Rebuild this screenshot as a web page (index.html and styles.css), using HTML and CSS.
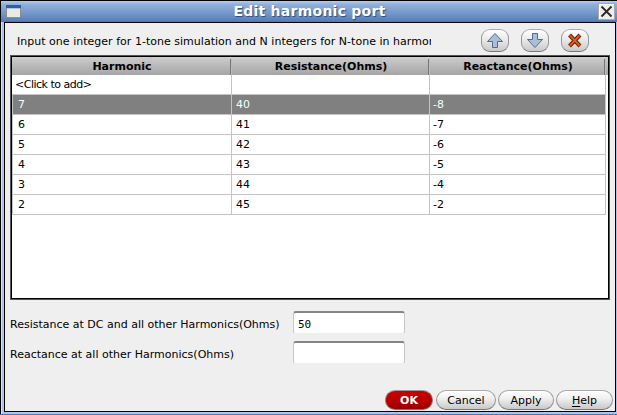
FILE: index.html
```
<!DOCTYPE html>
<html lang="en">
<head>
<meta charset="utf-8">
<title>Edit harmonic port</title>
<link rel="stylesheet" href="styles.css">
</head>
<body>
<div class="window">
  <header class="titlebar">
    <svg class="window-icon" width="15" height="13" viewBox="0 0 15 13" shape-rendering="crispEdges"><rect width="15" height="13" fill="#8d8d85"/><rect x="1" y="1" width="13" height="11" fill="#e8ebe5"/><rect width="15" height="3" fill="#315f9f"/><rect x="1" y="3" width="13" height="1" fill="#a9c4e5"/></svg>
    <h1>Edit harmonic port</h1>
    <button class="close" aria-label="Close"><svg width="17" height="17" viewBox="0 0 17 17"><path d="M3.5 3.5 13.5 13.5M13.5 3.5 3.5 13.5" stroke="#292929" stroke-width="1.8"/></svg></button>
  </header>
  <main class="content">
    <div class="toolbar">
      <p class="hint"><span class="hint-text">Input one integer for 1-tone simulation and N integers for N-tone in harmonic</span></p>
      <div class="tools">
        <button class="tool" aria-label="Move up"><svg width="18" height="18" viewBox="0 0 18 18"><path d="M9 1.5 16.5 9.5H11.5V15.5H6.5V9.5H1.5Z" fill="#a8bfd6" stroke="#526d8c"/></svg></button>
        <button class="tool" aria-label="Move down"><svg width="18" height="18" viewBox="0 0 18 18"><path d="M6.5 1.5H11.5V7.5H16.5L9 15.5 1.5 7.5H6.5Z" fill="#a8bfd6" stroke="#526d8c"/></svg></button>
        <button class="tool" aria-label="Delete"><svg width="18" height="18" viewBox="0 0 18 18"><path d="M3.5 3 14 14M14 3 3.5 14" stroke="#7d2805" stroke-width="4"/><path d="M4 3.5 13.5 13.5M13.5 3.5 4 13.5" stroke="#df6329" stroke-width="1.8"/></svg></button>
      </div>
    </div>
    <div class="table-frame">
      <table>
        <colgroup><col class="col-h"><col class="col-r"><col class="col-x"></colgroup>
        <thead><tr><th>Harmonic</th><th>Resistance(Ohms)</th><th>Reactance(Ohms)</th></tr></thead>
        <tbody>
          <tr class="add"><td>&lt;Click to add&gt;</td><td></td><td></td></tr>
          <tr class="selected"><td>7</td><td>40</td><td>-8</td></tr>
          <tr><td>6</td><td>41</td><td>-7</td></tr>
          <tr><td>5</td><td>42</td><td>-6</td></tr>
          <tr><td>4</td><td>43</td><td>-5</td></tr>
          <tr><td>3</td><td>44</td><td>-4</td></tr>
          <tr><td>2</td><td>45</td><td>-2</td></tr>
        </tbody>
      </table>
    </div>
    <form class="fields">
      <label for="res">Resistance at DC and all other Harmonics(Ohms)</label><input id="res" value="50">
      <label for="rea" class="second">Reactance at all other Harmonics(Ohms)</label><input id="rea">
    </form>
    <footer class="actions">
      <button class="ok">OK</button><button class="cancel">Cancel</button><button class="apply">Apply</button><button class="help"><u>H</u>elp</button>
    </footer>
  </main>
</div>
</body>
</html>
```
FILE: styles.css
```
* { box-sizing: border-box; }
body { margin: 0; overflow: hidden; font: 11px "DejaVu Sans", sans-serif; color: #000; }
button { padding: 0; font: inherit; color: inherit; }
svg { display: block; }
.window {
  width: 617px; height: 415px; padding: 0 1px 3px 4px;
  border-top: 1px solid #000;
  background: linear-gradient(#4a78b4, #4a78b4) bottom / 100% 1px no-repeat,
    linear-gradient(90deg, #000 1px, #d5e1f5 1px 2px, #adc3e8 2px 4px, #adc3e8 4px);
}
.titlebar {
  display: flex; align-items: center; height: 21px;
  margin: 0 -1px 0 -3px; padding: 0 2px 0 5px;
  background: linear-gradient(#b5cdef, #92b1dd 15%, #5f87bd 85%, #5079b0);
}
.window-icon { margin-bottom: 1px; }
h1 {
  flex: 1; margin: -1px 0 0; text-align: center; white-space: nowrap;
  color: #fff; font-size: 14px; line-height: 20px; letter-spacing: .25px;
  text-shadow: 1px 1px 1px #304d77;
}
.close { width: 17px; height: 17px; border: 0; background: #eee; box-shadow: inset 0 0 0 1px #aaa, inset 2px 2px #fff; }
.content {
  display: flex; flex-direction: column; height: 390px; padding: 6px 4px 1px 5px;
  border: 1px solid #000; background: #efefef;
}
.toolbar { display: flex; height: 26px; }
.hint { width: 414px; height: 25px; margin: 0 0 0 7px; overflow: hidden; line-height: 26px; white-space: nowrap; }
.hint-text { letter-spacing: .02px; }
.tools { display: flex; gap: 12px; margin-left: 50px; }
.tool {
  display: grid; place-items: center; width: 28px; height: 23px;
  border: 1px solid #929292; border-color: #aaa #969696 #777; border-radius: 9px;
  background: linear-gradient(#fff, #e7e7e7 50%, #c9c9c9);
}
.table-frame {
  width: 600px; height: 245px; border: 2px solid #000; background: #fff;
  outline: 1px solid #555; outline-offset: -1px;
}
table { width: 596px; border-spacing: 0; table-layout: fixed; }
.col-h { width: 220px; }
.col-r { width: 198px; }
.col-x { width: 178px; }
th {
  position: relative; height: 18px; padding: 2px 0 0; line-height: 16px;
  background: linear-gradient(#cecccc, #a5a5a5);
}
th::after { content: ""; position: absolute; right: 1px; top: 2px; bottom: 0; width: 1px; background: #777; box-shadow: 1px 0 #bbb; }
th:last-child { padding-right: 2px; }
th:last-child::after { right: 3px; }
td { position: relative; height: 20px; padding: 1px 0 0 4px; line-height: 18px; border: solid #c4c4c4; border-width: 0 1px 1px 0; }
td:first-child { padding-left: 5px; border-left-width: 1px; }
.add td:first-child { padding-left: 3px; border-left-width: 0; letter-spacing: -.5px; }
td:last-child { padding-left: 3px; border-right: 0; }
td:last-child::after {
  content: ""; position: absolute; top: 0; right: 0; bottom: -1px; width: 3px;
  background: linear-gradient(90deg, #c4c4c4 1px, #fff 1px);
}
.selected td { background: #808080; background-clip: padding-box; color: #f0ffff; }
.fields { display: grid; grid-template-columns: 283px 112px; grid-auto-rows: 23px; row-gap: 7px; margin-top: 11px; align-items: center; }
label { padding-top: 3px; white-space: nowrap; }
input {
  width: 112px; height: 23px; padding: 2px 4px 0; outline: 0;
  border: solid; border-width: 2px 1px 1px; border-color: #858585 #c8c8c8 #eee; border-radius: 3px;
  background: #fff; font: 11px "DejaVu Sans Mono", monospace;
}
.actions { display: flex; justify-content: flex-end; gap: 2px; height: 20px; margin: auto -2px 0 0; }
.actions button {
  height: 20px; padding-top: 2px; border: 1px solid; border-color: #aaa #969696 #777;
  border-radius: 10px; line-height: 14px; background: linear-gradient(#fff, #eee 45%, #c8c8c8);
}
.actions .ok { width: 48px; margin-right: 1px; color: #fff; font-weight: bold; border-color: #999 #a66 #777; background: linear-gradient(#ca0000, #b90000 55%, #980000); }
.cancel { width: 60px; }
.apply { width: 56px; }
.help { width: 57px; }
u { text-underline-offset: 2px; }
```
